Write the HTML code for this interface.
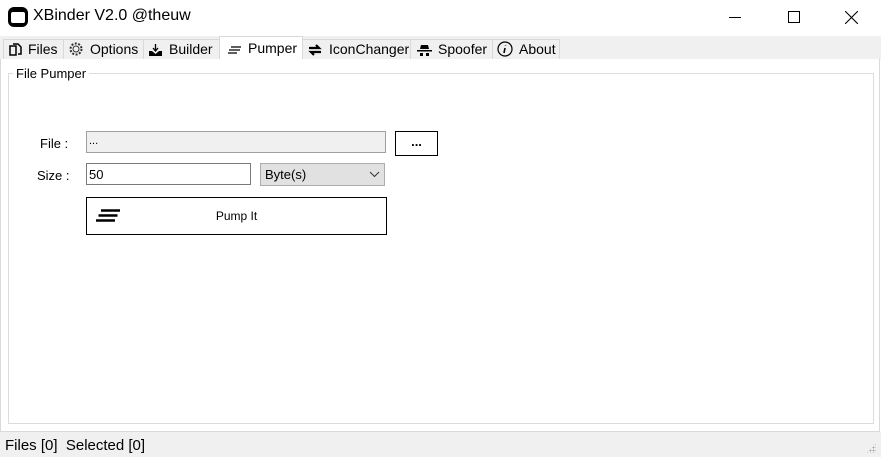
<!DOCTYPE html><html><head><style>
*{box-sizing:border-box;margin:0;padding:0}
body{width:881px;height:457px;background:#fff;font-family:"Liberation Sans",sans-serif;font-size:13px;color:#000;position:relative;overflow:hidden}
.a{position:absolute}
.tab{position:absolute;top:39px;height:21px;background:#f0f0f0;border:1px solid #d9d9d9;border-bottom:none;font-size:14px;line-height:19px;padding-left:4px;white-space:nowrap}
.tab svg{vertical-align:-3px;margin-right:6px}
</style></head><body>
<div class="a" style="left:8px;top:7px;width:20px;height:20px;border-radius:6px;background:#000"></div>
<div class="a" style="left:11px;top:12px;width:14px;height:11px;border-radius:2px;background:#fff"></div>
<div class="a" style="left:33px;top:7px;font-size:16px">XBinder V2.0 @theuw</div>
<div class="a" style="left:729px;top:17px;width:12px;height:1px;background:#000"></div>
<div class="a" style="left:788px;top:11px;width:12px;height:12px;border:1px solid #000"></div>
<svg class="a" style="left:845px;top:11px" width="13" height="13"><path d="M0 0L13 13M13 0L0 13" stroke="#000" stroke-width="1.1"/></svg>
<div class="a" style="left:0;top:36px;width:881px;height:24px;background:#f0f0f0"></div>
<div class="tab" style="left:3px;width:61px"><svg width="14" height="14"><path d="M2 3h6v9H2zM5 1h5l3 3v7h-3" fill="none" stroke="#000" stroke-width="1.5"/></svg>Files</div>
<div class="tab" style="left:63px;width:81px"><svg width="16" height="16"><circle cx="8" cy="8" r="5.5" fill="none" stroke="#333" stroke-width="2" stroke-dasharray="2 1.5"/><circle cx="8" cy="8" r="3" fill="none" stroke="#333"/></svg>Options</div>
<div class="tab" style="left:143px;width:77px"><svg width="15" height="14"><path d="M1 8v5h13V8L11 8 7.5 11 4 8z" fill="#000"/><path d="M7.5 1v7M5 5l2.5 3 2.5-3" fill="none" stroke="#000" stroke-width="1.3"/></svg>Builder</div>
<div class="tab" style="left:219px;top:36px;width:84px;height:24px;background:#fff;padding-left:8px;line-height:22px"><svg width="14" height="12"><path d="M3 3h10M1 6h11M0 9h9" stroke="#000" stroke-width="1.2"/></svg>Pumper</div>
<div class="tab" style="left:302px;width:109px"><svg width="16" height="14"><path d="M2 5h10l-3-3M14 9H4l3 3" fill="none" stroke="#000" stroke-width="2.2"/></svg>IconChanger</div>
<div class="tab" style="left:410px;width:83px;padding-left:6px"><svg width="15" height="14"><path d="M4 2h7l1 4H3zM0 7h15v1.5H0zM3 10h3v3H3zM9 10h3v3H9z" fill="#000"/></svg>Spoofer</div>
<div class="tab" style="left:492px;width:68px"><svg width="16" height="16"><circle cx="8" cy="8" r="7" fill="none" stroke="#000" stroke-width="1.2"/><path d="M8.5 4.5v.5M8 7l-1 5" stroke="#000" stroke-width="1.6"/></svg>About</div>
<div class="a" style="left:0;top:59px;width:880px;height:373px;border:1px solid #d9d9d9;border-top:none;background:#fff"></div>
<div class="a" style="left:219px;top:59px;width:84px;height:1px;background:#fff"></div>
<div class="a" style="left:8px;top:73px;width:866px;height:351px;border:1px solid #dcdcdc"></div>
<div class="a" style="left:13px;top:66px;background:#fff;padding:0 3px">File Pumper</div>
<div class="a" style="left:40px;top:136px">File :</div>
<div class="a" style="left:86px;top:131px;width:300px;height:22px;background:#f0f0f0;border:1px solid #a0a0a0;font-size:11px;padding:3px 2px">...</div>
<div class="a" style="left:395px;top:131px;width:43px;height:25px;border:1px solid #000;text-align:center;font-weight:bold;line-height:20px">...</div>
<div class="a" style="left:37px;top:168px">Size :</div>
<div class="a" style="left:86px;top:163px;width:165px;height:22px;border:1px solid #7a7a7a;padding:3px 2px">50</div>
<div class="a" style="left:260px;top:163px;width:125px;height:23px;background:#e1e1e1;border:1px solid #adadad;padding:3px 4px">Byte(s)</div>
<svg class="a" style="left:369px;top:171px" width="11" height="7"><path d="M1 1l4.5 4.5L10 1" fill="none" stroke="#333"/></svg>
<div class="a" style="left:86px;top:197px;width:301px;height:38px;border:1px solid #000;text-align:center;line-height:36px;font-size:12px">Pump It</div>
<svg class="a" style="left:96px;top:209px" width="26" height="14"><path d="M5 1.5h19M2.5 6.5h19M0 11.5h19" stroke="#000" stroke-width="2.5"/></svg>
<div class="a" style="left:0;top:432px;width:881px;height:25px;background:#f0f0f0"></div>
<div class="a" style="left:5px;top:437px;font-size:15px;letter-spacing:0px">Files [0]&nbsp;&nbsp;Selected [0]</div>
<div class="a" style="left:866px;top:443px;width:10px;height:10px;background:radial-gradient(circle,#aaa 0.8px,transparent 1px) 0 0/3px 3px;clip-path:polygon(100% 0,100% 100%,0 100%)"></div>
</body></html>
